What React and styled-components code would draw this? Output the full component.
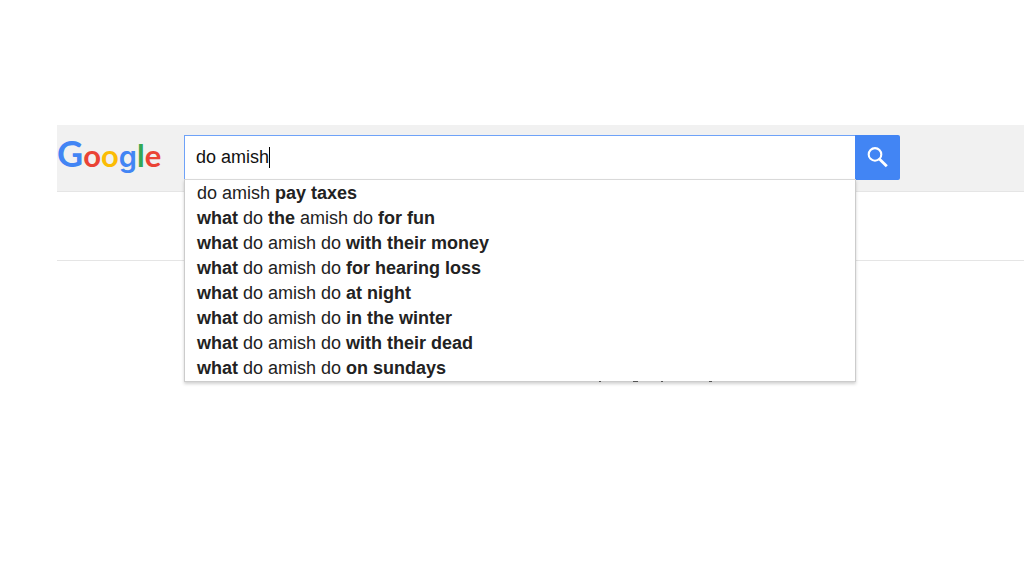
import React, { useState } from 'react';
import styled, { createGlobalStyle } from 'styled-components';

const suggestions = [
  ['do amish ', <b>pay taxes</b>],
  [<b>what</b>, ' do ', <b>the</b>, ' amish do ', <b>for fun</b>],
  [<b>what</b>, ' do amish do ', <b>with their money</b>],
  [<b>what</b>, ' do amish do ', <b>for hearing loss</b>],
  [<b>what</b>, ' do amish do ', <b>at night</b>],
  [<b>what</b>, ' do amish do ', <b>in the winter</b>],
  [<b>what</b>, ' do amish do ', <b>with their dead</b>],
  [<b>what</b>, ' do amish do ', <b>on sundays</b>],
];

const App = () => {
  const [query, setQuery] = useState('do amish');

  return (
    <>
      <GlobalStyle />
      <Page>
        <Header>
          <Logo href="#" aria-label="Google">
            <LogoLetter $color={COLORS.blue} $size={36}>G</LogoLetter>
            <LogoLetter $color={COLORS.red}>o</LogoLetter>
            <LogoLetter $color={COLORS.yellow}>o</LogoLetter>
            <LogoLetter $color={COLORS.blue} $font="Inter" $size={29}>g</LogoLetter>
            <LogoLetter $color={COLORS.green}>l</LogoLetter>
            <LogoLetter $color={COLORS.red}>e</LogoLetter>
          </Logo>
          <SearchForm role="search" onSubmit={(e) => e.preventDefault()}>
            <SearchField>
              <SearchBox>
                <SearchInput
                  type="text"
                  aria-label="Search"
                  autoComplete="off"
                  value={query}
                  onChange={(e) => setQuery(e.target.value)}
                />
                <Caret />
              </SearchBox>
              <Suggestions>
                {suggestions.map((parts, i) => (
                  <Suggestion key={i}>
                    {parts.map((part, j) => (
                      <React.Fragment key={j}>{part}</React.Fragment>
                    ))}
                  </Suggestion>
                ))}
                {/* descenders of the result line hidden behind the menu */}
                <HiddenLine viewBox="0 0 114 2" aria-hidden="true">
                  <path d="M1 .5h2M35 .5h5M63 .5h2M111 .5h3" stroke="#555" strokeWidth="1" />
                </HiddenLine>
              </Suggestions>
            </SearchField>
            <SearchButton type="submit" aria-label="Google Search">
              <svg width="22" height="22" viewBox="0 1 22 22" fill="none" stroke="#fff" aria-hidden="true">
                <circle cx="8" cy="8.4" r="6.3" strokeWidth="2.1" />
                <path d="M12.4 12.9L19.8 20.3" strokeWidth="2.8" />
              </svg>
            </SearchButton>
          </SearchForm>
        </Header>
        <NavBar />
      </Page>
    </>
  );
};

export default App;

const COLORS = {
  blue: '#4285f4',
  red: '#ea4335',
  yellow: '#fbbc05',
  green: '#34a853',
  bar: '#f1f1f1',
  line: '#e5e5e5',
};

const GlobalStyle = createGlobalStyle`
  * {
    box-sizing: border-box;
  }

  body {
    margin: 0;
    background: #fff;
    font-family: "Liberation Sans", Arial, sans-serif;
  }
`;

const Page = styled.main`
  min-height: 100vh;
  padding: 125px 0 0 57px;
`;

const Header = styled.header`
  display: flex;
  align-items: flex-start;
  gap: 20px;
  height: 67px;
  padding-top: 10px;
  background: ${COLORS.bar};
  border-bottom: 1px solid ${COLORS.line};
`;

const Logo = styled.a`
  display: flex;
  align-items: baseline;
  flex: 0 0 107px;
  line-height: 36px;
  text-decoration: none;
`;

const LogoLetter = styled.span`
  color: ${({ $color }) => $color};
  font-family: ${({ $font = 'Lato' }) => $font}, sans-serif;
  font-size: ${({ $size = 31 }) => $size}px;
  font-weight: ${({ $font }) => ($font ? 600 : 700)};
`;

const SearchForm = styled.form`
  display: flex;
  flex: 1;
  max-width: 716px;
  margin-right: 20px;
`;

const SearchField = styled.div`
  position: relative;
  flex: 1;
`;

const SearchBox = styled.div`
  display: flex;
  align-items: center;
  height: 45px;
  padding: 0 11px 2px;
  background: #fff;
  border: 1px solid #6ea2f8;
  border-width: 1px 0 0 1px;
`;

const SearchInput = styled.input`
  field-sizing: content;
  padding: 0;
  border: 0;
  outline: 0;
  background: transparent;
  color: #111;
  caret-color: transparent;
  font: 18px/22px "Liberation Sans", Arial, sans-serif;
`;

const Caret = styled.span`
  width: 1px;
  height: 21px;
  background: #000;
`;

const Suggestions = styled.ul`
  position: absolute;
  top: 44px;
  left: 0;
  right: -1px;
  margin: 0;
  padding: 1px 0 0;
  list-style: none;
  background: #fff;
  border: 1px solid #ccc;
  border-top-color: #d9d9d9;
  box-shadow: 0 2px 3px rgba(0, 0, 0, 0.18);
`;

const Suggestion = styled.li`
  padding: 0 12px;
  color: #222;
  font-size: 18px;
  line-height: 25px;
  cursor: default;
`;

const HiddenLine = styled.svg`
  position: absolute;
  top: 100%;
  right: 143px;
  width: 114px;
  height: 2px;
`;

const SearchButton = styled.button`
  display: flex;
  align-items: center;
  justify-content: center;
  width: 45px;
  height: 45px;
  padding: 0;
  border: 0;
  border-radius: 0 2px 2px 0;
  background: ${COLORS.blue};
  cursor: pointer;
`;

const NavBar = styled.div`
  height: 69px;
  border-bottom: 1px solid ${COLORS.line};
`;
